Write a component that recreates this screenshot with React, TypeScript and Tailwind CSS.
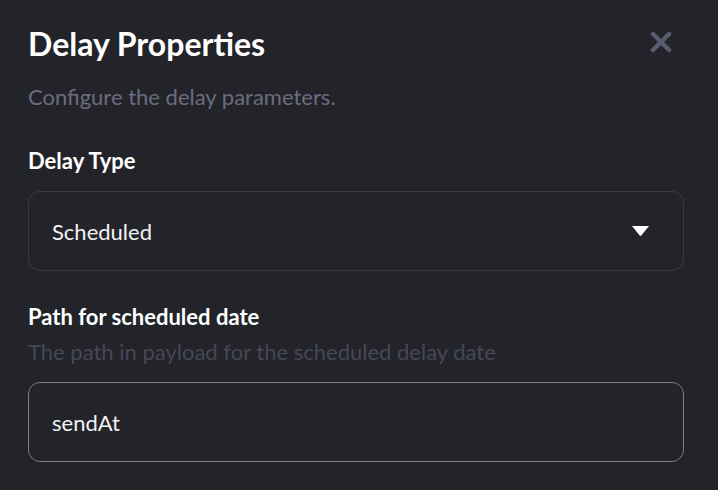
import React from 'react';

const App: React.FC = () => {
  return (
    <div
      className="w-[718px] h-[490px] bg-[#232429] overflow-hidden pl-[28px] pr-[34px] pt-[24px]"
      style={{ fontFamily: 'Lato, "Noto Sans", sans-serif' }}
    >
      {/* Header */}
      <div className="flex items-start justify-between">
        <h2 className="text-[32px] leading-[40px] font-bold text-white">Delay Properties</h2>
        <button className="mt-[7px] mr-[12px] text-[#5b5b70]">
          <svg width="22" height="22" viewBox="0 0 22 22" fill="none">
            <path d="M3 3 L19 19 M19 3 L3 19" stroke="currentColor" strokeWidth="4.5" strokeLinecap="round" />
          </svg>
        </button>
      </div>
      <p className="mt-[19px] text-[22px] leading-[28px] text-[#6c6c80]">Configure the delay parameters.</p>

      {/* Delay type */}
      <div className="mt-[36px]">
        <label className="block text-[22px] leading-[28px] font-bold text-white">Delay Type</label>
        <div className="mt-[16px] h-[80px] rounded-[12px] border border-[#393a47] flex items-center justify-between pl-[23px] pr-[34px]">
          <span className="text-[22px] text-[#f2f2f5]">Scheduled</span>
          <svg width="17" height="10" viewBox="0 0 17 10">
            <path d="M0 0 H17 L9.5 9.2 Q8.5 10.2 7.5 9.2 Z" fill="#ffffff" />
          </svg>
        </div>
      </div>

      {/* Path */}
      <div className="mt-[32px]">
        <label className="block text-[22px] leading-[28px] font-bold text-white">Path for scheduled date</label>
        <p className="mt-[7px] text-[22px] leading-[28px] text-[#464757]">The path in payload for the scheduled delay date</p>
        <div className="mt-[16px] h-[80px] rounded-[12px] border border-[#7b7b8f] flex items-center pl-[23px]">
          <span className="text-[22px] text-[#f2f2f5]">sendAt</span>
        </div>
      </div>
    </div>
  );
};

export default App;
